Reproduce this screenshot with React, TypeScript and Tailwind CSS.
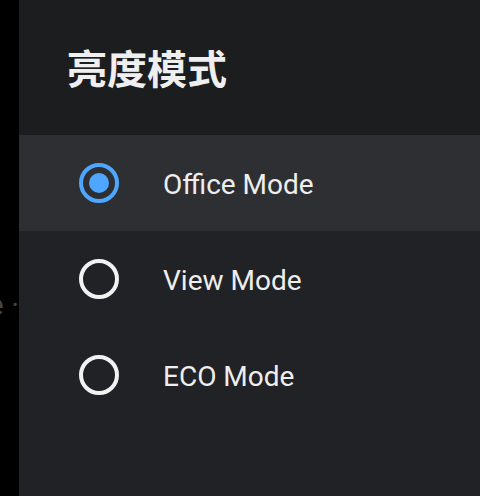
const modes = ["Office Mode", "View Mode", "ECO Mode"];

const Radio: React.FC<{ checked: boolean }> = ({ checked }) => (
  <div
    className={
      "w-10 h-10 rounded-full border-4 flex items-center justify-center shrink-0 " +
      (checked ? "border-[#4ea6ff]" : "border-[#f2f2f2]")
    }
  >
    {checked && <div className="w-5 h-5 rounded-full bg-[#4ea6ff]"></div>}
  </div>
);

export default function App() {
  const selected = 0;
  return (
    <div className="flex w-[480px] h-[496px] overflow-hidden bg-black font-['Roboto','Noto_Sans_CJK_SC',sans-serif]">
      <div className="w-[19px] shrink-0 overflow-hidden flex justify-end items-start pt-[290px]">
        <span className="whitespace-nowrap text-[30px] text-[#454545] leading-none">Mode ·</span>
      </div>
      <div className="flex-1 flex flex-col bg-[#212226]">
        <div className="h-[135px] bg-[#1c1d1f] flex items-center pl-[48px] pb-[2px]">
          <h1 className="text-[40px] font-bold text-[#efefef] leading-none font-['Noto_Sans_CJK_SC',sans-serif]">
            亮度模式
          </h1>
        </div>
        {modes.map((m, i) => (
          <div
            key={m}
            className={
              "h-[96px] flex items-center pl-[60px] " +
              (i === selected ? "bg-[#2e2f33]" : "bg-[#212226]")
            }
          >
            <Radio checked={i === selected} />
            <span className="ml-[44px] mt-[3px] text-[28px] text-[#eeeeee]">{m}</span>
          </div>
        ))}
      </div>
    </div>
  );
}
